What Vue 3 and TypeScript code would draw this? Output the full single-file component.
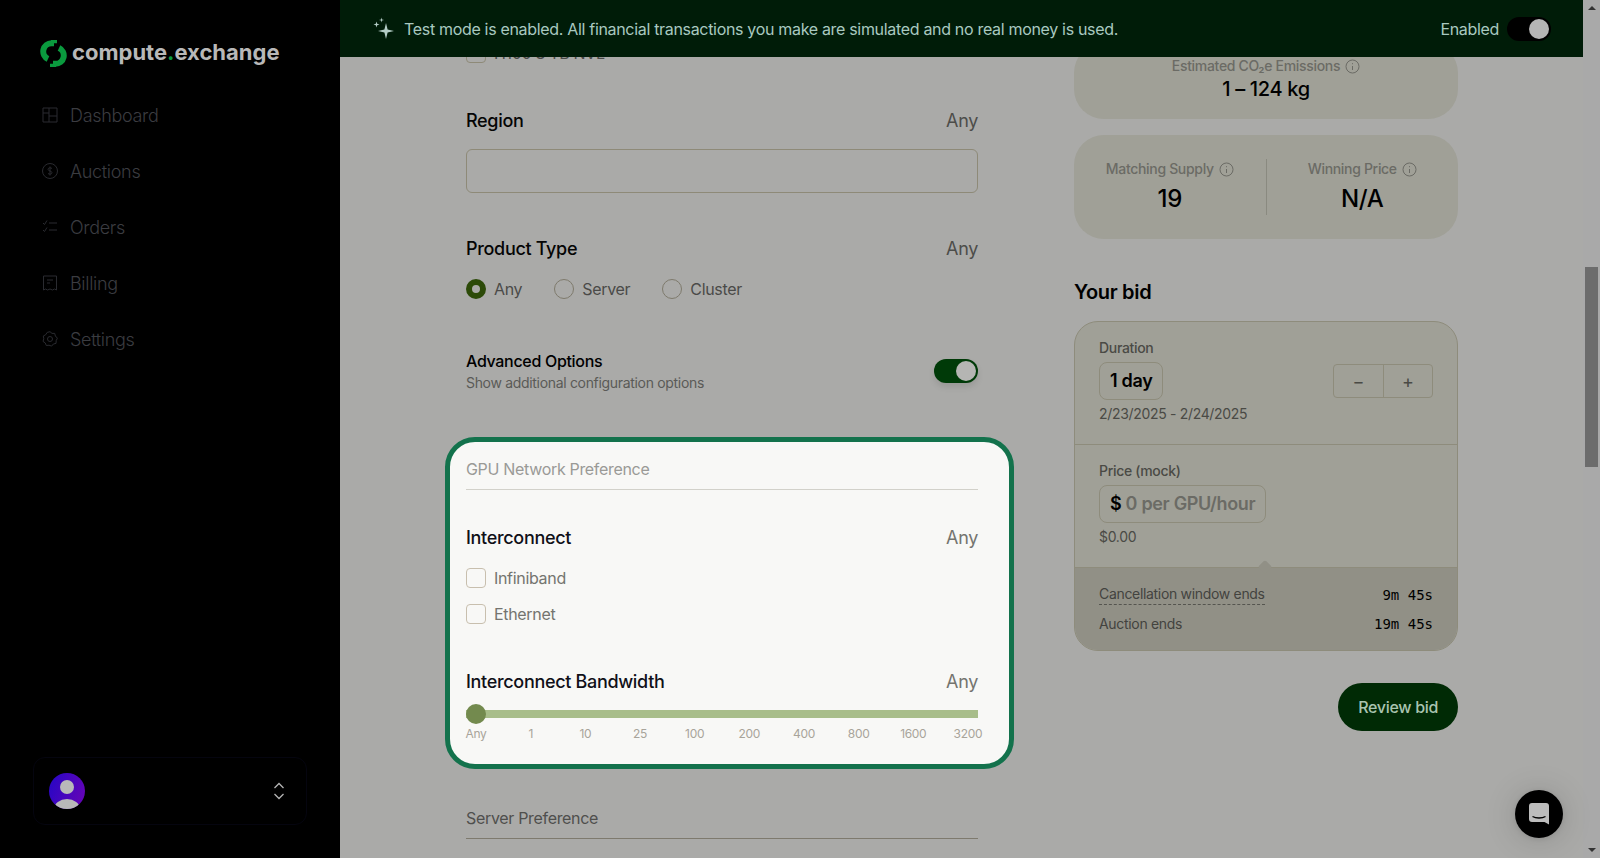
<template>
  <div class="app">
    <aside class="sidebar">
      <div class="logo">
        <svg class="logo-mark" width="27" height="27" viewBox="0 0 27 27" fill="none" stroke="#0a9a3e" stroke-width="6">
          <path d="M14 3.2H11.5A8.3 8.3 0 0 0 8 19" />
          <path d="M13 23.8H15.5A8.3 8.3 0 0 0 19 8" />
          <path d="M14 3.2V0M13 23.8V27" />
        </svg>
        <span class="logo-text">compute<span class="logo-dot">.</span>exchange</span>
      </div>
      <nav class="nav">
        <a v-for="item in navItems" :key="item.label" class="nav-item">
          <svg width="16" height="16" viewBox="0 0 16 16" fill="none" stroke="currentColor" stroke-width="1">
            <path v-for="d in item.paths" :key="d" :d="d" />
          </svg>
          <span>{{ item.label }}</span>
        </a>
      </nav>
      <div class="user-box">
        <div class="avatar">
          <svg width="36" height="36" viewBox="0 0 36 36" fill="#b9b9b9">
            <circle cx="18" cy="14" r="7" />
            <ellipse cx="18" cy="36" rx="13" ry="10" />
          </svg>
        </div>
        <svg width="12" height="18" viewBox="0 0 12 18" fill="none" stroke="#b4b4b4" stroke-width="1.3">
          <path d="M1.5 6L6 1.5L10.5 6M1.5 12L6 16.5L10.5 12" />
        </svg>
      </div>
    </aside>

    <main class="main">
      <header class="banner">
        <svg class="sparkle" width="24" height="26" viewBox="0 0 24 26" fill="#b4cdc6">
          <path d="M14 7L15.6 13.4L22 15L15.6 16.6L14 23L12.4 16.6L6 15L12.4 13.4Z" />
          <path d="M4.5 5.5L5.2 7.8L7.5 8.5L5.2 9.2L4.5 11.5L3.8 9.2L1.5 8.5L3.8 7.8Z" />
          <path d="M9.5 1.5L10 3.5L12 4L10 4.5L9.5 6.5L9 4.5L7 4L9 3.5Z" />
        </svg>
        <span class="banner-text">Test mode is enabled. All financial transactions you make are simulated and no real money is used.</span>
        <span class="banner-state">Enabled</span>
        <span class="test-toggle"><i></i></span>
      </header>

      <div class="scroll">
        <div class="columns">
          <section class="form">
            <label class="check clipped"><i class="box"></i><span>H100 8 TB NVL</span></label>

            <div class="field-head region-head"><span>Region</span><em>Any</em></div>
            <div class="text-input"></div>

            <div class="field-head type-head"><span>Product Type</span><em>Any</em></div>
            <div class="radios">
              <label v-for="(opt, i) in productTypes" :key="opt" class="radio">
                <i :class="{ on: i === 0 }"></i><span>{{ opt }}</span>
              </label>
            </div>

            <div class="advanced">
              <div>
                <div class="advanced-title">Advanced Options</div>
                <div class="advanced-sub">Show additional configuration options</div>
              </div>
              <span class="adv-toggle"><i></i></span>
            </div>

            <div class="highlight">
              <div class="group-title">GPU Network Preference</div>
              <div class="field-head light connect-head"><span>Interconnect</span><em>Any</em></div>
              <label class="check light first"><i class="box"></i><span>Infiniband</span></label>
              <label class="check light second"><i class="box"></i><span>Ethernet</span></label>
              <div class="field-head light band-head"><span>Interconnect Bandwidth</span><em>Any</em></div>
              <div class="slider"><i></i></div>
              <div class="ticks">
                <span v-for="t in ticks" :key="t"><b>{{ t }}</b></span>
              </div>
            </div>

            <div class="group-title dim">Server Preference</div>
          </section>

          <section class="summary">
            <div class="stat-card co2">
              <div class="stat-label">Estimated CO₂e Emissions <svg width="15" height="15" viewBox="0 0 15 15" fill="none" stroke="currentColor"><circle cx="7.5" cy="7.5" r="6.5" /><path d="M7.5 7V11M7.5 4.2V5.2" /></svg></div>
              <div class="co2-value">1 – 124 kg</div>
            </div>
            <div class="stat-card pair">
              <div class="pair-cell">
                <div class="stat-label">Matching Supply <svg width="15" height="15" viewBox="0 0 15 15" fill="none" stroke="currentColor"><circle cx="7.5" cy="7.5" r="6.5" /><path d="M7.5 7V11M7.5 4.2V5.2" /></svg></div>
                <div class="pair-value">19</div>
              </div>
              <div class="pair-cell">
                <div class="stat-label">Winning Price <svg width="15" height="15" viewBox="0 0 15 15" fill="none" stroke="currentColor"><circle cx="7.5" cy="7.5" r="6.5" /><path d="M7.5 7V11M7.5 4.2V5.2" /></svg></div>
                <div class="pair-value">N/A</div>
              </div>
            </div>

            <h2 class="bid-title">Your bid</h2>
            <div class="bid-card">
              <div class="bid-section duration">
                <div class="bid-label">Duration</div>
                <div class="duration-row">
                  <div class="value-box">1 day</div>
                  <div class="stepper">
                    <button>−</button>
                    <button>+</button>
                  </div>
                </div>
                <div class="bid-note">2/23/2025 - 2/24/2025</div>
              </div>
              <div class="bid-section price">
                <div class="bid-label">Price (mock)</div>
                <div class="value-box">$ <span class="placeholder">0 per GPU/hour</span></div>
                <div class="bid-note">$0.00</div>
              </div>
              <div class="bid-foot">
                <div class="foot-row">
                  <span class="dashed">Cancellation window ends</span>
                  <code>9m 45s</code>
                </div>
                <div class="foot-row">
                  <span>Auction ends</span>
                  <code>19m 45s</code>
                </div>
              </div>
            </div>
            <div class="actions">
              <button class="review">Review bid</button>
            </div>
          </section>
        </div>
      </div>
    </main>

    <div class="scrollbar">
      <i class="arrow up"></i>
      <div class="track"><div class="thumb"></div></div>
      <i class="arrow down"></i>
    </div>

    <div class="chat">
      <svg width="20" height="22" viewBox="0 0 20 22">
        <path fill="#bdbdbd" d="M3 0H17A3 3 0 0 1 20 3V21.5L15.5 19H3A3 3 0 0 1 0 16V3A3 3 0 0 1 3 0Z" />
        <path d="M3.5 13.5C7 15.5 13 15.5 16.5 13.5" fill="none" stroke="#000" stroke-width="1.3" />
      </svg>
    </div>
  </div>
</template>

<script setup lang="ts">
interface NavItem {
  label: string
  paths: string[]
}

const navItems: NavItem[] = [
  { label: 'Dashboard', paths: ['M1 1H15V15H1Z', 'M7 1V15', 'M1 6H7', 'M7 9H15'] },
  { label: 'Auctions', paths: ['M15.5 8A7.5 7.5 0 1 1 .5 8A7.5 7.5 0 1 1 15.5 8Z', 'M10 5.5C9 4.5 6 4.5 6 6.3C6 8.3 10 7.7 10 9.7C10 11.5 7 11.5 6 10.5', 'M8 3.5V12.5'] },
  { label: 'Orders', paths: ['M1 4L2.5 5.5L5 1.5', 'M1 11L2.5 12.5L5 8.5', 'M7 4H15', 'M7 11H15'] },
  { label: 'Billing', paths: ['M1.5 15V1H14.5V15L12.5 14L10.5 15L8 14L5.5 15L3.5 14Z', 'M5 5H11', 'M5 8H8'] },
  { label: 'Settings', paths: ['M8 .7L10 2.4L12.7 2.4L13.4 5L15.4 7.2L14.2 9.6L14 12.4L11.4 13L9.6 15.1L7 14.2L4.3 14.5L3.3 12L1 10.4L1.8 7.8L1.3 5L3.7 3.7L5.2 1.4Z', 'M10.5 8A2.5 2.5 0 1 1 5.5 8A2.5 2.5 0 1 1 10.5 8Z'] }
]

const productTypes = ['Any', 'Server', 'Cluster']
const ticks = ['Any', '1', '10', '25', '100', '200', '400', '800', '1600', '3200']
</script>

<style>
html,
body {
  margin: 0;
  height: 100%;
  overflow: hidden;
}
</style>

<style scoped>
.app {
  display: flex;
  height: 858px;
  background: #aaaaa8;
  color: #000;
  font-family: Inter, "Liberation Sans", sans-serif;
  font-size: 16px;
  letter-spacing: -0.02em;
}

.sidebar {
  width: 340px;
  flex: none;
  background: #000;
  display: flex;
  flex-direction: column;
  padding: 40px 33px 33px 40px;
  box-sizing: border-box;
}

.logo {
  display: flex;
  align-items: center;
  gap: 5px;
  height: 27px;
}

.logo-text {
  color: #b8b8b8;
  font-size: 22px;
  font-weight: 700;
  letter-spacing: 0;
  line-height: 24px;
  margin-top: -4px;
}

.logo-dot {
  color: #0a9a3e;
}

.nav {
  margin-top: 20px;
  display: flex;
  flex-direction: column;
}

.nav-item {
  display: flex;
  align-items: center;
  gap: 12px;
  height: 56px;
  padding-left: 2px;
  color: #3b3c41;
  font-size: 18px;
  font-weight: 300;
}

.nav-item svg {
  color: #2a2b30;
}

.user-box {
  margin-top: auto;
  margin-left: -7px;
  height: 68px;
  box-sizing: border-box;
  border: 1px solid #05050f;
  border-radius: 12px;
  display: flex;
  align-items: center;
  justify-content: space-between;
  padding: 0 21px 0 15px;
}

.avatar {
  width: 36px;
  height: 36px;
  border-radius: 50%;
  overflow: hidden;
  background: linear-gradient(110deg, #2506c6, #6a04b4);
}

.avatar svg {
  display: block;
}

.main {
  flex: 1;
  min-width: 0;
  display: flex;
  flex-direction: column;
}

.banner {
  height: 57px;
  flex: none;
  background: #001c08;
  color: #a9c9c0;
  display: flex;
  align-items: center;
  padding: 0 32px 0 32px;
  box-sizing: border-box;
}

.sparkle {
  margin-left: 0;
  margin-right: 8px;
}

.banner-text {
  flex: 1;
}

.banner-state {
  margin-right: 8px;
}

.test-toggle {
  width: 44px;
  height: 24px;
  border-radius: 12px;
  background: #000;
  display: flex;
  align-items: center;
  justify-content: flex-end;
  padding: 0 2px;
  box-sizing: border-box;
}

.test-toggle i {
  width: 20px;
  height: 20px;
  border-radius: 50%;
  background: #b5b5b5;
}

.scroll {
  flex: 1;
  min-height: 0;
  overflow: hidden;
}

.columns {
  display: flex;
  gap: 96px;
  margin-top: -14px;
  padding: 0 125px 0 126px;
}

.form {
  width: 512px;
  flex: none;
}

.summary {
  width: 384px;
  flex: none;
}

.check {
  display: flex;
  align-items: center;
  gap: 8px;
  height: 20px;
  color: #4a4a48;
}

.box {
  width: 20px;
  height: 20px;
  box-sizing: border-box;
  border: 1px solid #8e8a78;
  border-radius: 4px;
}

.field-head {
  display: flex;
  justify-content: space-between;
  align-items: center;
  line-height: 24px;
  font-size: 18px;
  font-weight: 500;
  color: #050505;
}

.field-head em {
  font-style: normal;
  font-weight: 400;
  color: #4d4d4a;
}

.region-head {
  margin-top: 46px;
}

.text-input {
  margin-top: 16px;
  height: 44px;
  box-sizing: border-box;
  border: 1px solid #8e8a78;
  border-radius: 6px;
}

.type-head {
  margin-top: 44px;
}

.radios {
  margin-top: 18px;
  display: flex;
  gap: 32px;
}

.radio {
  display: flex;
  align-items: center;
  gap: 8px;
  height: 20px;
  color: #4a4a48;
}

.radio i {
  width: 20px;
  height: 20px;
  box-sizing: border-box;
  border: 1px solid #7e7a6c;
  border-radius: 50%;
}

.radio i.on {
  border: 6.5px solid #2c4a08;
  background: #aaaaa8;
}

.advanced {
  margin-top: 50px;
  display: flex;
  justify-content: space-between;
  align-items: center;
}

.advanced-title {
  line-height: 24px;
  font-weight: 500;
}

.advanced-sub {
  line-height: 20px;
  font-size: 14px;
  color: #5a5a57;
}

.adv-toggle {
  width: 44px;
  height: 24px;
  border-radius: 12px;
  background: #003a08;
  display: flex;
  align-items: center;
  justify-content: flex-end;
  padding: 0 2px;
  box-sizing: border-box;
  box-shadow: 0 4px 6px rgba(0, 0, 0, 0.1);
}

.adv-toggle i {
  width: 20px;
  height: 20px;
  border-radius: 50%;
  background: #b5b5b3;
}

.highlight {
  margin: 44px -36px 0 -21px;
  padding: 15px 31px 22px 16px;
  background: #f8f8f6;
  border: 5px solid #13724c;
  border-radius: 30px;
}

.group-title {
  line-height: 24px;
  padding-bottom: 8px;
  border-bottom: 1px solid #d2d1ca;
  color: #9a9a96;
}

.group-title.dim {
  margin-top: 37px;
  color: #4f4f4d;
  border-bottom-color: #7e7a6e;
}

.field-head.light em {
  color: #74746f;
}

.field-head.light span {
  color: #101018;
}

.connect-head {
  margin-top: 36px;
}

.check.light {
  color: #74746f;
}

.check.light .box {
  border-color: #c8bfae;
}

.check.first {
  margin-top: 18px;
}

.check.second {
  margin-top: 16px;
}

.band-head {
  margin-top: 46px;
}

.slider {
  margin-top: 10px;
  height: 20px;
  display: flex;
  align-items: center;
  background: linear-gradient(#a8bd8a, #a8bd8a) center / 100% 8px no-repeat;
  border-radius: 4px;
}

.slider i {
  width: 20px;
  height: 20px;
  border-radius: 50%;
  background: #738a4e;
}

.ticks {
  margin-top: 2px;
  display: flex;
  justify-content: space-between;
}

.ticks span {
  width: 20px;
  display: flex;
  justify-content: center;
}

.ticks b {
  font-weight: 400;
  font-size: 12px;
  line-height: 16px;
  color: #a8a49a;
  white-space: nowrap;
}

.stat-card {
  background: #a0a097;
  border-radius: 30px;
}

.co2 {
  padding: 13px 0 17px;
  text-align: center;
}

.stat-label {
  font-size: 14px;
  font-weight: 500;
  line-height: 20px;
  color: #6b6b65;
  display: flex;
  align-items: center;
  justify-content: center;
  gap: 5px;
}

.co2-value {
  font-size: 20px;
  font-weight: 500;
  line-height: 26px;
}

.pair {
  margin-top: 16px;
  padding: 24px 0;
  display: flex;
}

.pair-cell {
  flex: 1;
  height: 56px;
  text-align: center;
}

.pair-cell + .pair-cell {
  border-left: 1px solid #8a8a80;
}

.pair-value {
  margin-top: 4px;
  font-size: 24px;
  font-weight: 500;
  line-height: 32px;
}

.bid-title {
  margin: 39px 0 15px;
  font-size: 20px;
  font-weight: 600;
  line-height: 28px;
}

.bid-card {
  border: 1px solid #8e8c7c;
  border-radius: 24px;
  background: #a0a097;
  overflow: hidden;
}

.bid-section {
  padding: 16px 24px 20px;
}

.duration {
  border-bottom: 1px solid #8e8c7c;
}

.bid-label {
  font-size: 14px;
  font-weight: 500;
  line-height: 20px;
  color: #4a4a45;
}

.duration-row {
  display: flex;
  align-items: center;
  justify-content: space-between;
}

.value-box {
  margin-top: 4px;
  display: inline-block;
  height: 38px;
  box-sizing: border-box;
  border: 1px solid #8e8c7c;
  border-radius: 8px;
  padding: 0 10px;
  font-size: 18px;
  font-weight: 600;
  line-height: 36px;
}

.placeholder {
  color: #6b6b65;
}

.stepper {
  margin-top: 4px;
  display: flex;
  border: 1px solid #8e8c7c;
  border-radius: 4px;
}

.stepper button {
  width: 49px;
  height: 32px;
  border: none;
  background: none;
  padding: 0;
  color: #4a4a45;
  font-family: inherit;
  font-size: 18px;
}

.stepper button + button {
  border-left: 1px solid #8e8c7c;
}

.bid-note {
  margin-top: 4px;
  font-size: 14px;
  line-height: 20px;
  color: #4a4a45;
}

.bid-foot {
  position: relative;
  border-top: 1px solid #8e8c7c;
  background: #919086;
  padding: 16px 24px 16px;
  display: flex;
  flex-direction: column;
  gap: 9px;
}

.bid-foot::before {
  content: "";
  position: absolute;
  left: 185px;
  top: -6px;
  width: 10px;
  height: 10px;
  background: #919086;
  transform: rotate(45deg);
  border-radius: 2px;
}

.foot-row {
  position: relative;
  display: flex;
  justify-content: space-between;
  align-items: center;
  font-size: 14px;
  line-height: 20px;
  color: #43433f;
}

.dashed {
  border-bottom: 1px dashed #55554f;
}

code {
  font-family: "DejaVu Sans Mono", monospace;
  font-size: 14px;
  color: #000;
  letter-spacing: 0;
}

.actions {
  margin-top: 32px;
  display: flex;
  justify-content: flex-end;
}

.review {
  height: 48px;
  padding: 0 20px;
  border: none;
  border-radius: 24px;
  background: #002a05;
  color: #a9c4b0;
  font-family: inherit;
  font-size: 16px;
  font-weight: 500;
  letter-spacing: inherit;
}

.scrollbar {
  width: 17px;
  flex: none;
  display: flex;
  flex-direction: column;
  align-items: center;
  background: #a9a9a9;
}

.arrow {
  width: 0;
  height: 0;
  border-left: 4px solid transparent;
  border-right: 4px solid transparent;
  margin: 6px 0;
}

.arrow.up {
  border-bottom: 4px solid #333;
}

.arrow.down {
  border-top: 4px solid #333;
}

.track {
  flex: 1;
  width: 100%;
  padding-top: 251px;
  box-sizing: border-box;
}

.thumb {
  width: 13px;
  margin: 0 auto;
  height: 200px;
  background: #6c6c6c;
}

.chat {
  position: fixed;
  right: 37px;
  bottom: 20px;
  width: 48px;
  height: 48px;
  border-radius: 50%;
  background: #000;
  display: flex;
  align-items: center;
  justify-content: center;
  box-shadow: 0 1px 6px rgba(0, 0, 0, 0.1), 0 2px 32px rgba(0, 0, 0, 0.16);
}
</style>
